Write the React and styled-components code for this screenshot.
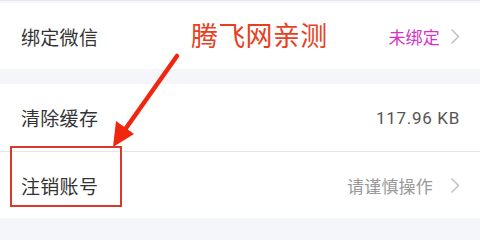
import React from 'react';
import styled, { createGlobalStyle } from 'styled-components';

const GlobalStyle = createGlobalStyle`
  html, body {
    margin: 0;
    padding: 0;
    background: #f5f6f9;
    font-family: "Noto Sans CJK SC", "Noto Sans", sans-serif;
  }
`;

const Page = styled.div`
  position: relative;
  width: 480px;
  height: 240px;
  overflow: hidden;
  background: #f5f6f9;
  padding-top: 2px;
  box-sizing: border-box;
  border-top: 1px solid #e8e8ec;
`;

const Group = styled.div`
  background: #fff;
  margin-bottom: ${(p) => p.gap || 0}px;
`;

const Row = styled.div`
  display: flex;
  align-items: center;
  justify-content: space-between;
  height: ${(p) => p.h || 66}px;
  padding: 0 20px 0 21px;
  border-top: ${(p) => (p.divider ? '1px solid #e6e6ea' : 'none')};
`;

const Label = styled.span`
  font-size: 19px;
  color: #333;
  letter-spacing: 0.3px;
`;

const Right = styled.div`
  display: flex;
  align-items: center;
  gap: ${(p) => p.gap || 11}px;
`;

const Value = styled.span`
  font-size: 17px;
  color: ${(p) => p.color || '#999'};
  letter-spacing: 0.2px;
`;

const Size = styled.span`
  font-family: Roboto, "Noto Sans", sans-serif;
  font-size: 17px;
  letter-spacing: 0.7px;
  color: #555;
`;

const Note = styled.div`
  position: absolute;
  left: 191px;
  top: 14px;
  font-size: 27px;
  color: #e8401e;
  letter-spacing: 0.3px;
`;

const Box = styled.div`
  position: absolute;
  left: 10px;
  top: 145px;
  width: 108px;
  height: 57px;
  border: 2px solid #d9382a;
`;

const Arrow = styled.svg`
  position: absolute;
  left: 0;
  top: 0;
`;

function Chevron() {
  return (
    <svg width="10" height="17" viewBox="0 0 10 17">
      <polyline points="1.5,1.5 8.5,8.5 1.5,15.5" fill="none" stroke="#c4c4c8" strokeWidth="1.6" />
    </svg>
  );
}

export default function App() {
  return (
    <Page>
      <GlobalStyle />
      <Group gap={15}>
        <Row h={66}>
          <Label>绑定微信</Label>
          <Right gap={10}>
            <Value color="#d632c3">未绑定</Value>
            <Chevron />
          </Right>
        </Row>
      </Group>
      <Group>
        <Row h={67}>
          <Label>清除缓存</Label>
          <Size>117.96 KB</Size>
        </Row>
        <Row h={66} divider>
          <Label>注销账号</Label>
          <Right gap={17}>
            <Value>请谨慎操作</Value>
            <Chevron />
          </Right>
        </Row>
      </Group>

      <Note>腾飞网亲测</Note>
      <Arrow width="480" height="240">
        <line x1="177" y1="55" x2="124" y2="130" stroke="#f0260f" strokeWidth="4.5" strokeLinecap="round" />
        <polygon points="113,146 116,120 134,133" fill="#f0260f" />
      </Arrow>
      <Box />
    </Page>
  );
}
